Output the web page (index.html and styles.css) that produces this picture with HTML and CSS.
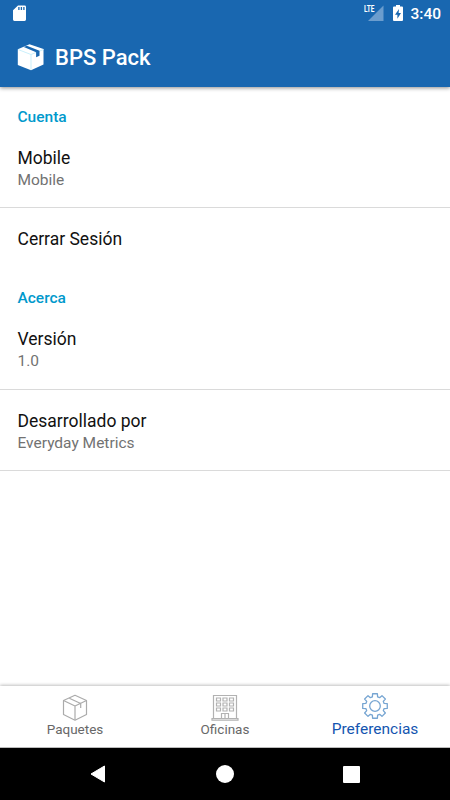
FILE: index.html
```
<!DOCTYPE html>
<html lang="es">
<head>
    <meta charset="UTF-8">
    <title>BPS Pack</title>
    <link rel="stylesheet" href="styles.css">
</head>
<body>
<header class="header">
    <div class="status">
        <svg class="sd" width="14" height="17" viewBox="0 0 14 17">
            <path d="M5 .5h6.6q1.4 0 1.4 1.4v12.700q0 1.400-1.400 1.400H1.400Q0 16 0 14.600V5.300z" fill="#fff"/>
            <path d="M5.900 2v3M8.400 2v3M10.900 2v3" stroke="#1967b0" stroke-width="1.300"/>
        </svg>
        <div class="status-right">
            <svg width="20" height="17" viewBox="0 0 20 17">
                <path d="M19.500 .5v15.500H4z" fill="#6b9dce"/>
                <path d="M0 0h11v9H0z" fill="#1967b0"/>
                <text class="lte" x="0" y="7.300" textLength="10.500" lengthAdjust="spacingAndGlyphs">LTE</text>
            </svg>
            <svg class="battery" width="10" height="17" viewBox="0 0 10 17">
                <path d="M3 0h4v1.600h2q1 0 1 1V15q0 1-1 1H1q-1 0-1-1V2.600q0-1 1-1h2z" fill="#fff"/>
                <path d="M6 4L2 9.700h2.400v4L8 8H5.600z" fill="#1967b0"/>
            </svg>
            <span class="clock">3:40</span>
        </div>
    </div>
    <div class="toolbar">
        <svg width="28" height="27" viewBox="0 0 28 27">
            <path d="M12.500.3L26.500 5v15.500L14 26.200.8 21V5.300z" fill="#fff"/>
            <path d="M1 5.500l13 5 12.500-5M14 10.500V26" stroke="#c3edfa" stroke-width=".9" fill="none"/>
            <path d="M6.800 3.100l3-1.300 12.700 5v5l-3.400 1.500V8.300z" fill="#1967b0"/>
        </svg>
        <h1>BPS Pack</h1>
    </div>
</header>

<main class="settings">
    <h2>Cuenta</h2>
    <div class="item">
        <div class="name">Mobile</div>
        <div class="value">Mobile</div>
    </div>
    <div class="item single">
        <div class="name">Cerrar Sesión</div>
    </div>
    <h2>Acerca</h2>
    <div class="item">
        <div class="name">Versión</div>
        <div class="value">1.0</div>
    </div>
    <div class="item">
        <div class="name">Desarrollado por</div>
        <div class="value">Everyday Metrics</div>
    </div>
</main>

<nav class="tabs">
    <div class="tab">
        <svg width="26" height="27" viewBox="0 0 26 27" fill="none" stroke="#ababab" stroke-width="1.200" stroke-linejoin="round">
            <path d="M13 1.300L24.500 6.500V20.500L13 26.200 1.500 20.500V6.500z"/>
            <path d="M1.500 6.500L13 12 24.500 6.500M13 12v14M7.300 4.200L18.700 9.500v4.500"/>
        </svg>
        <span>Paquetes</span>
    </div>
    <div class="tab">
        <svg width="28" height="27" viewBox="0 0 28 27" fill="none" stroke="#b2b2b2" stroke-width="1.200">
            <path d="M2.500 24.500V1.500h23V24.500M1 24.500h26v1.700H1z"/>
            <path d="M5.500 4h4v3h-4zM12 4h4v3h-4zM18.500 4h4v3h-4zM5.500 9h4v3h-4zM12 9h4v3h-4zM18.500 9h4v3h-4zM5.500 14h4v3h-4zM12 14h4v3h-4zM18.500 14h4v3h-4z"/>
            <path d="M10.500 24.500v-5h7v5M14 19.500v5"/>
        </svg>
        <span>Oficinas</span>
    </div>
    <div class="tab active">
        <svg width="28" height="28" viewBox="-14 -14 28 28" fill="none" stroke="#76a5d2" stroke-width="1.300" stroke-linejoin="round">
            <path d="M12.270 -2.390V2.390L9.130 2.620L8.310 4.610L10.360 6.990L6.990 10.360L4.610 8.310L2.620 9.130L2.390 12.270H-2.390L-2.620 9.130L-4.610 8.310L-6.990 10.360L-10.360 6.990L-8.310 4.610L-9.130 2.620L-12.270 2.390V-2.390L-9.130 -2.620L-8.310 -4.610L-10.360 -6.990L-6.990 -10.360L-4.610 -8.310L-2.620 -9.130L-2.390 -12.270H2.390L2.620 -9.130L4.610 -8.310L6.990 -10.360L10.360 -6.990L8.310 -4.610L9.130 -2.620z"/>
            <circle r="5.300"/>
        </svg>
        <span>Preferencias</span>
    </div>
</nav>

<!-- android navigation buttons -->
<footer class="system">
    <svg width="18" height="20" viewBox="0 0 18 20"><path d="M15.500 2v16L2 10z" fill="#fff" stroke="#fff" stroke-linejoin="round"/></svg>
    <svg width="18" height="18" viewBox="0 0 18 18"><circle cx="9" cy="9" r="9" fill="#fff"/></svg>
    <svg width="17" height="17" viewBox="0 0 17 17"><rect width="17" height="17" rx="1" fill="#fff"/></svg>
</footer>
</body>
</html>
```
FILE: styles.css
```
* {
    box-sizing: border-box;
}

body {
    margin: 0;
    height: 800px;
    display: flex;
    flex-direction: column;
    overflow: hidden;
    background: #fff;
    font-family: Roboto, sans-serif;
}

svg {
    display: block;
    flex: none;
}

.header {
    height: 87px;
    background: #1967b0;
    color: #fff;
    box-shadow: 0 1px 4px rgba(0,0,0,0.45);
}

.status {
    height: 27px;
    padding: 5px 9px 0 13px;
    display: flex;
    justify-content: space-between;
}

.status-right {
    display: flex;
}

.lte {
    font-size: 8.5px;
    font-weight: bold;
    fill: #fff;
}

.battery {
    margin-left: 9px;
}

.clock {
    margin-left: 7px;
    font-size: 15.5px;
    font-weight: 500;
    line-height: 18px;
}

.toolbar {
    height: 60px;
    padding-left: 17px;
    display: flex;
    align-items: center;
}

h1 {
    margin: 1px 0 0 10px;
    font-size: 22px;
    font-weight: 500;
}

.settings {
    flex: 1;
}

h2 {
    margin: 0;
    height: 40px;
    padding: 20px 17.5px 0;
    color: #0099cc;
    font-size: 15.5px;
    font-weight: 500;
    line-height: 20px;
}

.item {
    height: 81.3px;
    padding: 20px 17.5px 0;
    border-bottom: 1px solid #dadada;
}

.item.single {
    height: 60px;
    border-bottom: none;
}

.name {
    color: #111;
    font-size: 17.5px;
    line-height: 22px;
}

.value {
    color: #727272;
    font-size: 15.5px;
    line-height: 23px;
}

.tabs {
    height: 62px;
    display: flex;
    border-bottom: 1px solid #bbb;
    box-shadow: 0 -1px 3px rgba(0,0,0,0.25);
}

.tab {
    flex: 1;
    padding-top: 8px;
    display: flex;
    flex-direction: column;
    align-items: center;
    color: #686868;
    font-size: 13.5px;
    line-height: 16px;
}

.tab.active {
    padding-top: 6px;
    color: #1455b0;
    font-size: 15.5px;
    line-height: 18px;
}

.system {
    height: 52px;
    padding: 0 90px 0 89px;
    display: flex;
    align-items: center;
    justify-content: space-between;
    background: #000;
}
```
